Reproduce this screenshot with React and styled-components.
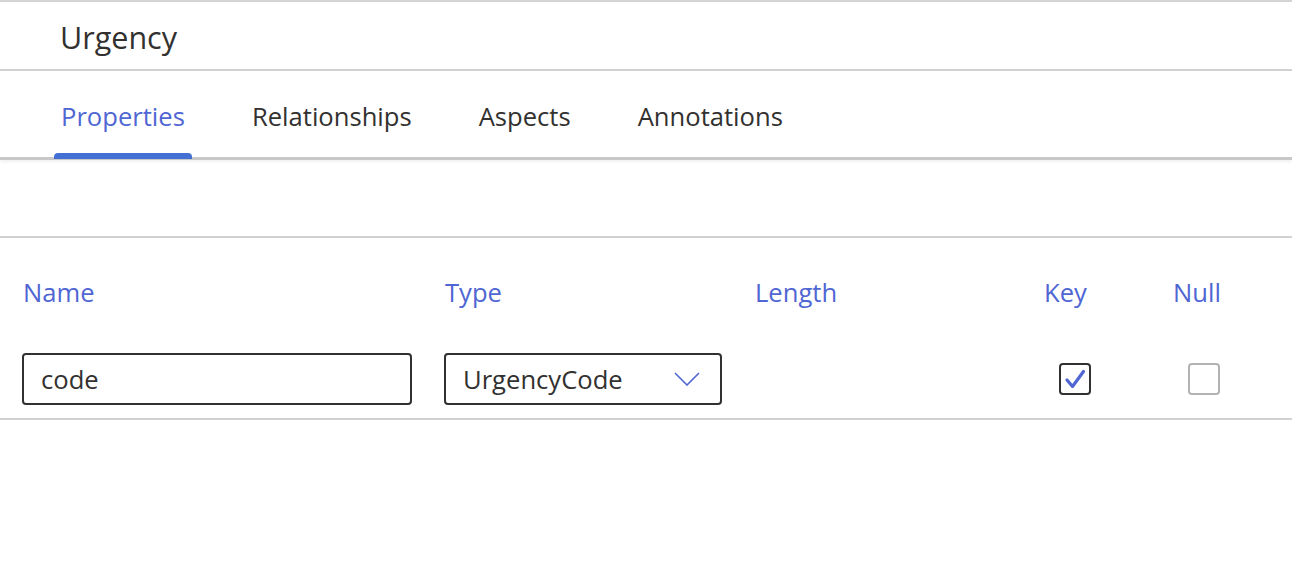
import styled, { createGlobalStyle } from 'styled-components';

const Global = createGlobalStyle`
  body {
    margin: 0;
    background: #fff;
    font-family: "Open Sans", "Noto Sans", sans-serif;
    color: #323130;
  }
`

const Page = styled.div`
  width: 1292px;
  border-top: 2px solid #d4d4d4;
`

const TitleBar = styled.div`
  height: 69px;
  box-sizing: border-box;
  display: flex;
  align-items: center;
  padding: 2px 0 0 60px;
  border-bottom: 2px solid #d1d1d1;
  font-size: 30.5px;
`

const Tabs = styled.div`
  display: flex;
  gap: 53px;
  padding-left: 54px;
  height: 86px;
  border-bottom: 3px solid #c8c8c8;
  box-shadow: 0 2px 3px rgba(0, 0, 0, 0.06);
`

const Tab = styled.div`
  position: relative;
  display: flex;
  align-items: center;
  padding: 4px 7px 0;
  font-size: 25.6px;
  color: ${p => (p.$active ? '#4f66d3' : '#323130')};

  &::after {
    content: '';
    display: ${p => (p.$active ? 'block' : 'none')};
    position: absolute;
    left: 0;
    right: 0;
    bottom: -2px;
    height: 6px;
    border-radius: 4px 4px 0 0;
    background: #4470d4;
  }
`

const Spacer = styled.div`
  height: 76px;
  border-bottom: 2px solid #d1d1d1;
`

const Grid = styled.div`
  display: grid;
  grid-template-columns: 422px 311px 289px 129px 1fr;
  padding-left: 22px;
`

const HeaderRow = styled(Grid)`
  padding-top: 37px;
`

const HeaderCell = styled.div`
  font-size: 25.6px;
  line-height: 36px;
  color: #4f66d3;
  padding-left: ${p => p.$indent || 0}px;
`

const BodyRow = styled(Grid)`
  align-items: center;
  padding: 42px 0 13px 22px;
  border-bottom: 2px solid #d1d1d1;
`

const TextInput = styled.input`
  box-sizing: border-box;
  width: 390px;
  height: 52px;
  border: 2px solid #323130;
  border-radius: 4px;
  padding: 0 17px;
  font-family: inherit;
  font-size: 25.6px;
  color: #323130;
  outline: none;
`

const Select = styled.div`
  box-sizing: border-box;
  width: 278px;
  height: 52px;
  border: 2px solid #323130;
  border-radius: 4px;
  padding: 0 20px 0 17px;
  display: flex;
  align-items: center;
  justify-content: space-between;
  font-size: 25.6px;
`

const Check = styled.div`
  box-sizing: border-box;
  width: 32px;
  height: 32px;
  margin-left: 15px;
  border: 2px solid ${p => (p.$checked ? '#323130' : '#b3b3b3')};
  border-radius: 4px;
  display: flex;
  align-items: center;
  justify-content: center;
`

const Chevron = () => (
  <svg width="26" height="14" viewBox="0 0 26 14" fill="none">
    <path d="M1 1 L13 13 L25 1" stroke="#4f66d3" strokeWidth="1.6" />
  </svg>
)

const Tick = () => (
  <svg width="22" height="22" viewBox="0 0 22 22" fill="none">
    <path d="M3 12 L8.5 18.5 L19.5 3.5" stroke="#4f66d3" strokeWidth="3.2" strokeLinecap="round" strokeLinejoin="round" />
  </svg>
)

export default function App() {
  return (
    <Page>
      <Global />
      <TitleBar>Urgency</TitleBar>
      <Tabs>
        <Tab $active>Properties</Tab>
        <Tab>Relationships</Tab>
        <Tab>Aspects</Tab>
        <Tab>Annotations</Tab>
      </Tabs>
      <Spacer />
      <HeaderRow>
        <HeaderCell $indent={1}>Name</HeaderCell>
        <HeaderCell $indent={1}>Type</HeaderCell>
        <HeaderCell>Length</HeaderCell>
        <HeaderCell>Key</HeaderCell>
        <HeaderCell>Null</HeaderCell>
      </HeaderRow>
      <BodyRow>
        <div><TextInput defaultValue="code" /></div>
        <div>
          <Select>
            <span>UrgencyCode</span>
            <Chevron />
          </Select>
        </div>
        <div />
        <div><Check $checked><Tick /></Check></div>
        <div><Check /></div>
      </BodyRow>
    </Page>
  );
}
